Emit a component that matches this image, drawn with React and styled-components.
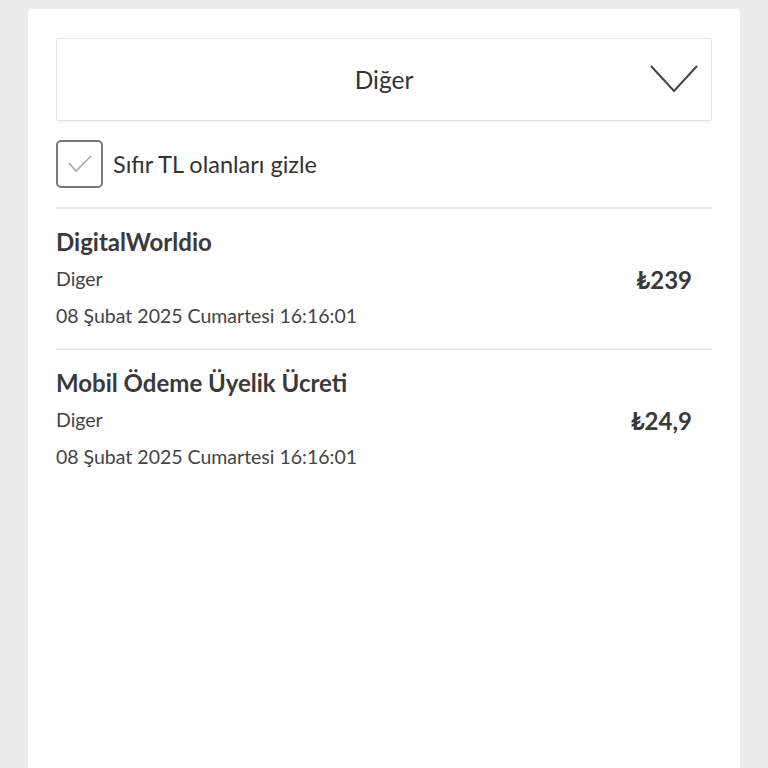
import React from 'react'
import styled, { createGlobalStyle } from 'styled-components'

const GlobalStyle = createGlobalStyle`
  html, body {
    margin: 0;
    padding: 0;
    background: #ebebeb;
    font-family: Lato, 'Noto Sans', sans-serif;
  }
`

const Page = styled.div`
  height: 768px;
  padding: 9px 28px 0;
  box-sizing: border-box;
  overflow: hidden;
`

const Card = styled.div`
  height: 100%;
  background: #fff;
  border-radius: 3px 3px 0 0;
  padding: 29px 28px 0;
  box-sizing: border-box;
`

const Select = styled.div`
  height: 83px;
  box-sizing: border-box;
  border: 1px solid #e4e4e4;
  border-radius: 2px;
  box-shadow: 0 1px 2px rgba(0, 0, 0, 0.04);
  display: flex;
  align-items: center;
  justify-content: center;
  position: relative;
  font-size: 24.5px;
  color: #333;
`

const Chevron = styled.svg`
  position: absolute;
  right: 13px;
  top: 26px;
`

const CheckRow = styled.label`
  display: flex;
  align-items: center;
  gap: 10px;
  margin-top: 19px;
  padding-bottom: 19px;
  border-bottom: 2px solid #e8e8e8;
  font-size: 23.5px;
  line-height: 28px;
  color: #333;
`

const Box = styled.span`
  width: 43px;
  height: 44px;
  border: 2px solid #7a7a7a;
  border-radius: 5px;
  display: flex;
  align-items: center;
  justify-content: center;
`

const Item = styled.div`
  display: grid;
  grid-template-columns: 1fr auto;
  align-items: center;
  padding: 19px 20px 18px 0;
  border-bottom: ${(p) => (p.$last ? 'none' : '2px solid #e8e8e8')};
`

const Info = styled.div`
  display: flex;
  flex-direction: column;
  gap: 9px;
`

const Title = styled.div`
  font-size: 24px;
  font-weight: 700;
  color: #3a3a3a;
  line-height: 28px;
`

const Line = styled.div`
  font-size: 19.5px;
  color: #444;
  line-height: 28px;
`

const Price = styled.div`
  font-size: 24px;
  font-weight: 700;
  color: #3a3a3a;
`

const items = [
  { title: 'DigitalWorldio', cat: 'Diger', date: '08 Şubat 2025 Cumartesi 16:16:01', price: '₺239' },
  { title: 'Mobil Ödeme Üyelik Ücreti', cat: 'Diger', date: '08 Şubat 2025 Cumartesi 16:16:01', price: '₺24,9' }
]

const App = () => (
  <Page>
    <GlobalStyle />
    <Card>
      <Select>
        Diğer
        <Chevron width="48" height="28" viewBox="0 0 48 28">
          <path d="M1 1 L24 26 L47 1" fill="none" stroke="#444" strokeWidth="2" />
        </Chevron>
      </Select>
      <CheckRow>
        <Box>
          <svg width="26" height="20" viewBox="0 0 26 20">
            <path d="M2 9 L9 17 L24 2" fill="none" stroke="#aaa" strokeWidth="1.6" />
          </svg>
        </Box>
        Sıfır TL olanları gizle
      </CheckRow>
      {items.map((it, i) => (
        <Item key={i} $last={i === items.length - 1}>
          <Info>
            <Title>{it.title}</Title>
            <Line>{it.cat}</Line>
            <Line>{it.date}</Line>
          </Info>
          <Price>{it.price}</Price>
        </Item>
      ))}
    </Card>
  </Page>
)

export default App
